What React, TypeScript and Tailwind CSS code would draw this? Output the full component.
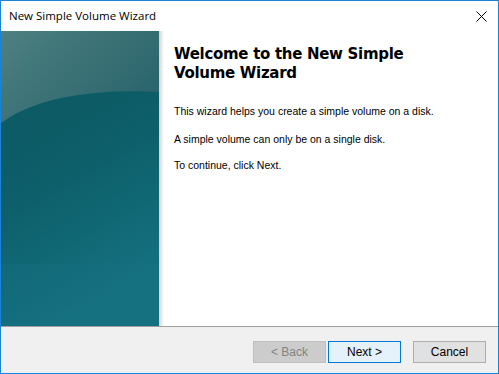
import React from 'react';

const SidePanel: React.FC = () => {
  return (
    <div className="relative w-[158px] shrink-0 overflow-hidden bg-[#0d5c66]">
      <svg width="158" height="295" viewBox="0 0 158 295" className="block">
        <defs>
          <linearGradient id="top" x1="0" y1="0" x2="1" y2="0.6">
            <stop offset="0" stopColor="#4d8080" />
            <stop offset="1" stopColor="#2b656d" />
          </linearGradient>
          <linearGradient id="body" x1="0" y1="0" x2="0.3" y2="1">
            <stop offset="0" stopColor="#0b555e" />
            <stop offset="0.55" stopColor="#0d5f6a" />
            <stop offset="1" stopColor="#14707f" />
          </linearGradient>
        </defs>
        <rect width="158" height="295" fill="url(#body)" />
        <path d="M0 0 H158 V61 C110 58 40 62 0 92 Z" fill="url(#top)" />
        <rect y="233" width="158" height="62" fill="#167080" opacity="0.35" />
      </svg>
    </div>
  );
};

const Button: React.FC<{ variant?: 'default' | 'primary' | 'disabled'; children: React.ReactNode }> = (props) => {
  const v = props.variant ?? 'default';
  return (
    <button
      className={
        'flex h-[22px] w-[73px] items-center justify-center border text-[12px] ' +
        (v === 'primary'
          ? 'border-[#0078d7] bg-[#e5f1fb] text-black'
          : v === 'disabled'
            ? 'border-[#bfbfbf] bg-[#cccccc] text-[#838383]'
            : 'border-[#adadad] bg-[#e1e1e1] text-black')
      }
      style={{ fontFamily: 'Liberation Sans, Arial, sans-serif' }}
    >
      {props.children}
    </button>
  );
};

export default function App() {
  return (
    <div className="flex h-[374px] w-[499px] flex-col border border-[#1883d7] bg-white">
      {/* title bar */}
      <div className="flex h-[30px] shrink-0 items-center justify-between pl-[8px] pr-[10px]">
        <span
          className="text-[11.5px] text-black"
          style={{ fontFamily: '"Open Sans", "Noto Sans", sans-serif' }}
        >
          New Simple Volume Wizard
        </span>
        <svg width="11" height="11" viewBox="0 0 11 11" className="mr-[1px]">
          <path d="M0.5 0.5 L10.5 10.5 M10.5 0.5 L0.5 10.5" stroke="#000" strokeWidth="1" />
        </svg>
      </div>

      {/* content */}
      <div className="flex h-[295px] shrink-0">
        <SidePanel />
        <div className="w-[5px] shrink-0 bg-gradient-to-r from-[#d4d4d4] to-white" />
        <div className="flex-1 pl-[10px] pt-[14px]">
          <h1
            className="text-[15px] font-bold leading-[19px] tracking-[-0.3px] text-black"
            style={{ fontFamily: '"DejaVu Sans", Verdana, sans-serif' }}
          >
            Welcome to the New Simple
            <br />
            Volume Wizard
          </h1>
          <div
            className="mt-[22px] flex flex-col gap-[15px] text-[10.5px] leading-[13px] text-black"
            style={{ fontFamily: '"Liberation Sans", Arial, sans-serif' }}
          >
            <p>This wizard helps you create a simple volume on a disk.</p>
            <p>A simple volume can only be on a single disk.</p>
            <p className="-mt-[2px]">To continue, click Next.</p>
          </div>
        </div>
      </div>

      {/* footer */}
      <div className="flex flex-1 items-start border-t border-[#a0a0a0] bg-[#f0f0f0] pl-[252px] pt-[14px]">
        <Button variant="disabled">&lt; Back</Button>
        <div className="w-[2px]" />
        <Button variant="primary">Next &gt;</Button>
        <div className="w-[12px]" />
        <Button>Cancel</Button>
      </div>
    </div>
  );
}
